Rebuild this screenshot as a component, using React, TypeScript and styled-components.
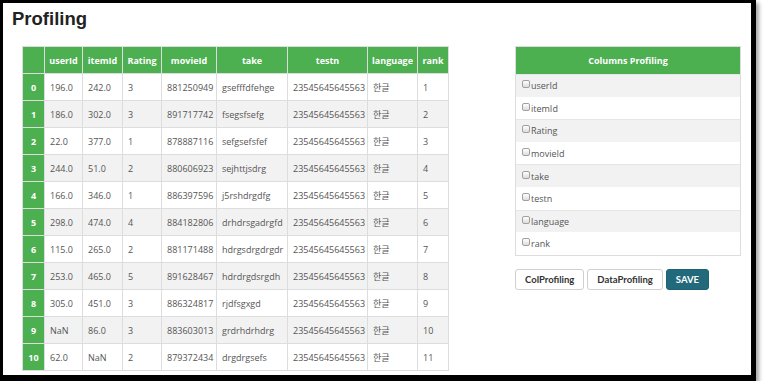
import styled, { createGlobalStyle } from "styled-components";

const GREEN = "#4caf50";
const LINE = "#dddddd";

const GlobalStyle = createGlobalStyle`
	html, body {
		margin: 0;
		background: #fff;
	}
	* {
		box-sizing: border-box;
	}
`;

const Frame = styled.div`
	width: 756px;
	height: 381px;
	border-style: solid;
	border-color: #000;
	border-width: 3px 5px 6px 3px;
	box-shadow: 3px 3px 4px rgba(0, 0, 0, 0.35);
	padding: 5px 0 0 9px;
	background: #fff;
`;

const Title = styled.h1`
	margin: 0;
	font-family: "Liberation Sans", Arial, sans-serif;
	font-size: 18.5px;
	line-height: 21px;
	font-weight: 700;
	color: #222;
`;

const Content = styled.div`
	display: flex;
	align-items: flex-start;
	gap: 66px;
	margin-top: 17px;
	margin-left: 10px;
`;

const DataTable = styled.table`
	width: 426px;
	table-layout: fixed;
	border-collapse: collapse;
	font-family: "Open Sans", "Noto Sans CJK KR", sans-serif;
	font-size: 9px;
	color: #555;
`;

const HeadCell = styled.th`
	height: 27px;
	padding: 0 3px;
	background: ${GREEN};
	color: #fff;
	font-weight: 700;
	text-align: center;
	border: 1px solid ${LINE};
	white-space: nowrap;
`;

const IndexCell = styled.td`
	height: 27px;
	background: ${GREEN};
	color: #fff;
	font-weight: 700;
	text-align: center;
	border: 1px solid ${LINE};
`;

const Row = styled.tr<{ $striped: boolean }>`
	background: ${(p) => (p.$striped ? "#f2f2f2" : "#fff")};
`;

const Cell = styled.td`
	height: 27px;
	padding: 0 5px;
	border: 1px solid ${LINE};
	white-space: nowrap;
	overflow: hidden;
`;

const Side = styled.div`
	display: flex;
	flex-direction: column;
	gap: 13px;
	width: 226px;
`;

const Panel = styled.div`
	border: 1px solid ${LINE};
	font-family: "Open Sans", sans-serif;
	font-size: 9px;
	color: #555;
`;

const PanelHead = styled.div`
	height: 27px;
	display: flex;
	align-items: center;
	justify-content: center;
	background: ${GREEN};
	color: #fff;
	font-weight: 700;
`;

const Option = styled.label<{ $striped: boolean }>`
	height: 22.6px;
	display: flex;
	align-items: center;
	padding-left: 6px;
	background: ${(p) => (p.$striped ? "#f2f2f2" : "#fff")};
	border-top: 1px solid ${(p) => (p.$striped ? "#e6e6e6" : "#fff")};
`;

const Check = styled.input`
	appearance: none;
	width: 8px;
	height: 8px;
	margin: 0 1px 3px 0;
	border: 1px solid #a0a0a0;
	border-radius: 2px;
	background: linear-gradient(#fff, #dcdcdc);
`;

const Buttons = styled.div`
	display: flex;
	gap: 3px;
`;

const Button = styled.button<{ $primary?: boolean }>`
	height: 21px;
	padding: 0 9px;
	font-family: "Lato", "Liberation Sans", sans-serif;
	font-size: 9.5px;
	font-weight: 700;
	border-radius: 3px;
	border: 1px solid ${(p) => (p.$primary ? "#1d6275" : "#d0d0d0")};
	background: ${(p) => (p.$primary ? "#22697c" : "#fff")};
	color: ${(p) => (p.$primary ? "#fff" : "#333")};
`;

const columns = ["userId", "itemId", "Rating", "movieId", "take", "testn", "language", "rank"];
const widths = [22, 38, 40, 39, 55, 71, 80, 50, 31];

const rows = [
	["196.0", "242.0", "3", "881250949", "gsefffdfehge", "1"],
	["186.0", "302.0", "3", "891717742", "fsegsfsefg", "2"],
	["22.0", "377.0", "1", "878887116", "sefgsefsfef", "3"],
	["244.0", "51.0", "2", "880606923", "sejhttjsdrg", "4"],
	["166.0", "346.0", "1", "886397596", "j5rshdrgdfg", "5"],
	["298.0", "474.0", "4", "884182806", "drhdrsgadrgfd", "6"],
	["115.0", "265.0", "2", "881171488", "hdrgsdrgdrgdr", "7"],
	["253.0", "465.0", "5", "891628467", "hdrdrgdsrgdh", "8"],
	["305.0", "451.0", "3", "886324817", "rjdfsgxgd", "9"],
	["NaN", "86.0", "3", "883603013", "grdrhdrhdrg", "10"],
	["62.0", "NaN", "2", "879372434", "drgdrgsefs", "11"],
];

export default function App() {
	return (
		<>
			<GlobalStyle />
			<Frame>
				<Title>Profiling</Title>
				<Content>
					<DataTable>
						<colgroup>
							{widths.map((w, i) => (
								<col key={i} style={{ width: w }} />
							))}
						</colgroup>
						<thead>
							<tr>
								<HeadCell />
								{columns.map((c) => (
									<HeadCell key={c}>{c}</HeadCell>
								))}
							</tr>
						</thead>
						<tbody>
							{rows.map((r, i) => (
								<Row key={i} $striped={i % 2 === 1}>
									<IndexCell>{i}</IndexCell>
									<Cell>{r[0]}</Cell>
									<Cell>{r[1]}</Cell>
									<Cell>{r[2]}</Cell>
									<Cell>{r[3]}</Cell>
									<Cell>{r[4]}</Cell>
									<Cell>23545645645563</Cell>
									<Cell>한글</Cell>
									<Cell>{r[5]}</Cell>
								</Row>
							))}
						</tbody>
					</DataTable>
					<Side>
						<Panel>
							<PanelHead>Columns Profiling</PanelHead>
							{columns.map((c, i) => (
								<Option key={c} $striped={i % 2 === 0}>
									<Check type="checkbox" />
									{c}
								</Option>
							))}
						</Panel>
						<Buttons>
							<Button>ColProfiling</Button>
							<Button>DataProfiling</Button>
							<Button $primary>SAVE</Button>
						</Buttons>
					</Side>
				</Content>
			</Frame>
		</>
	);
}
